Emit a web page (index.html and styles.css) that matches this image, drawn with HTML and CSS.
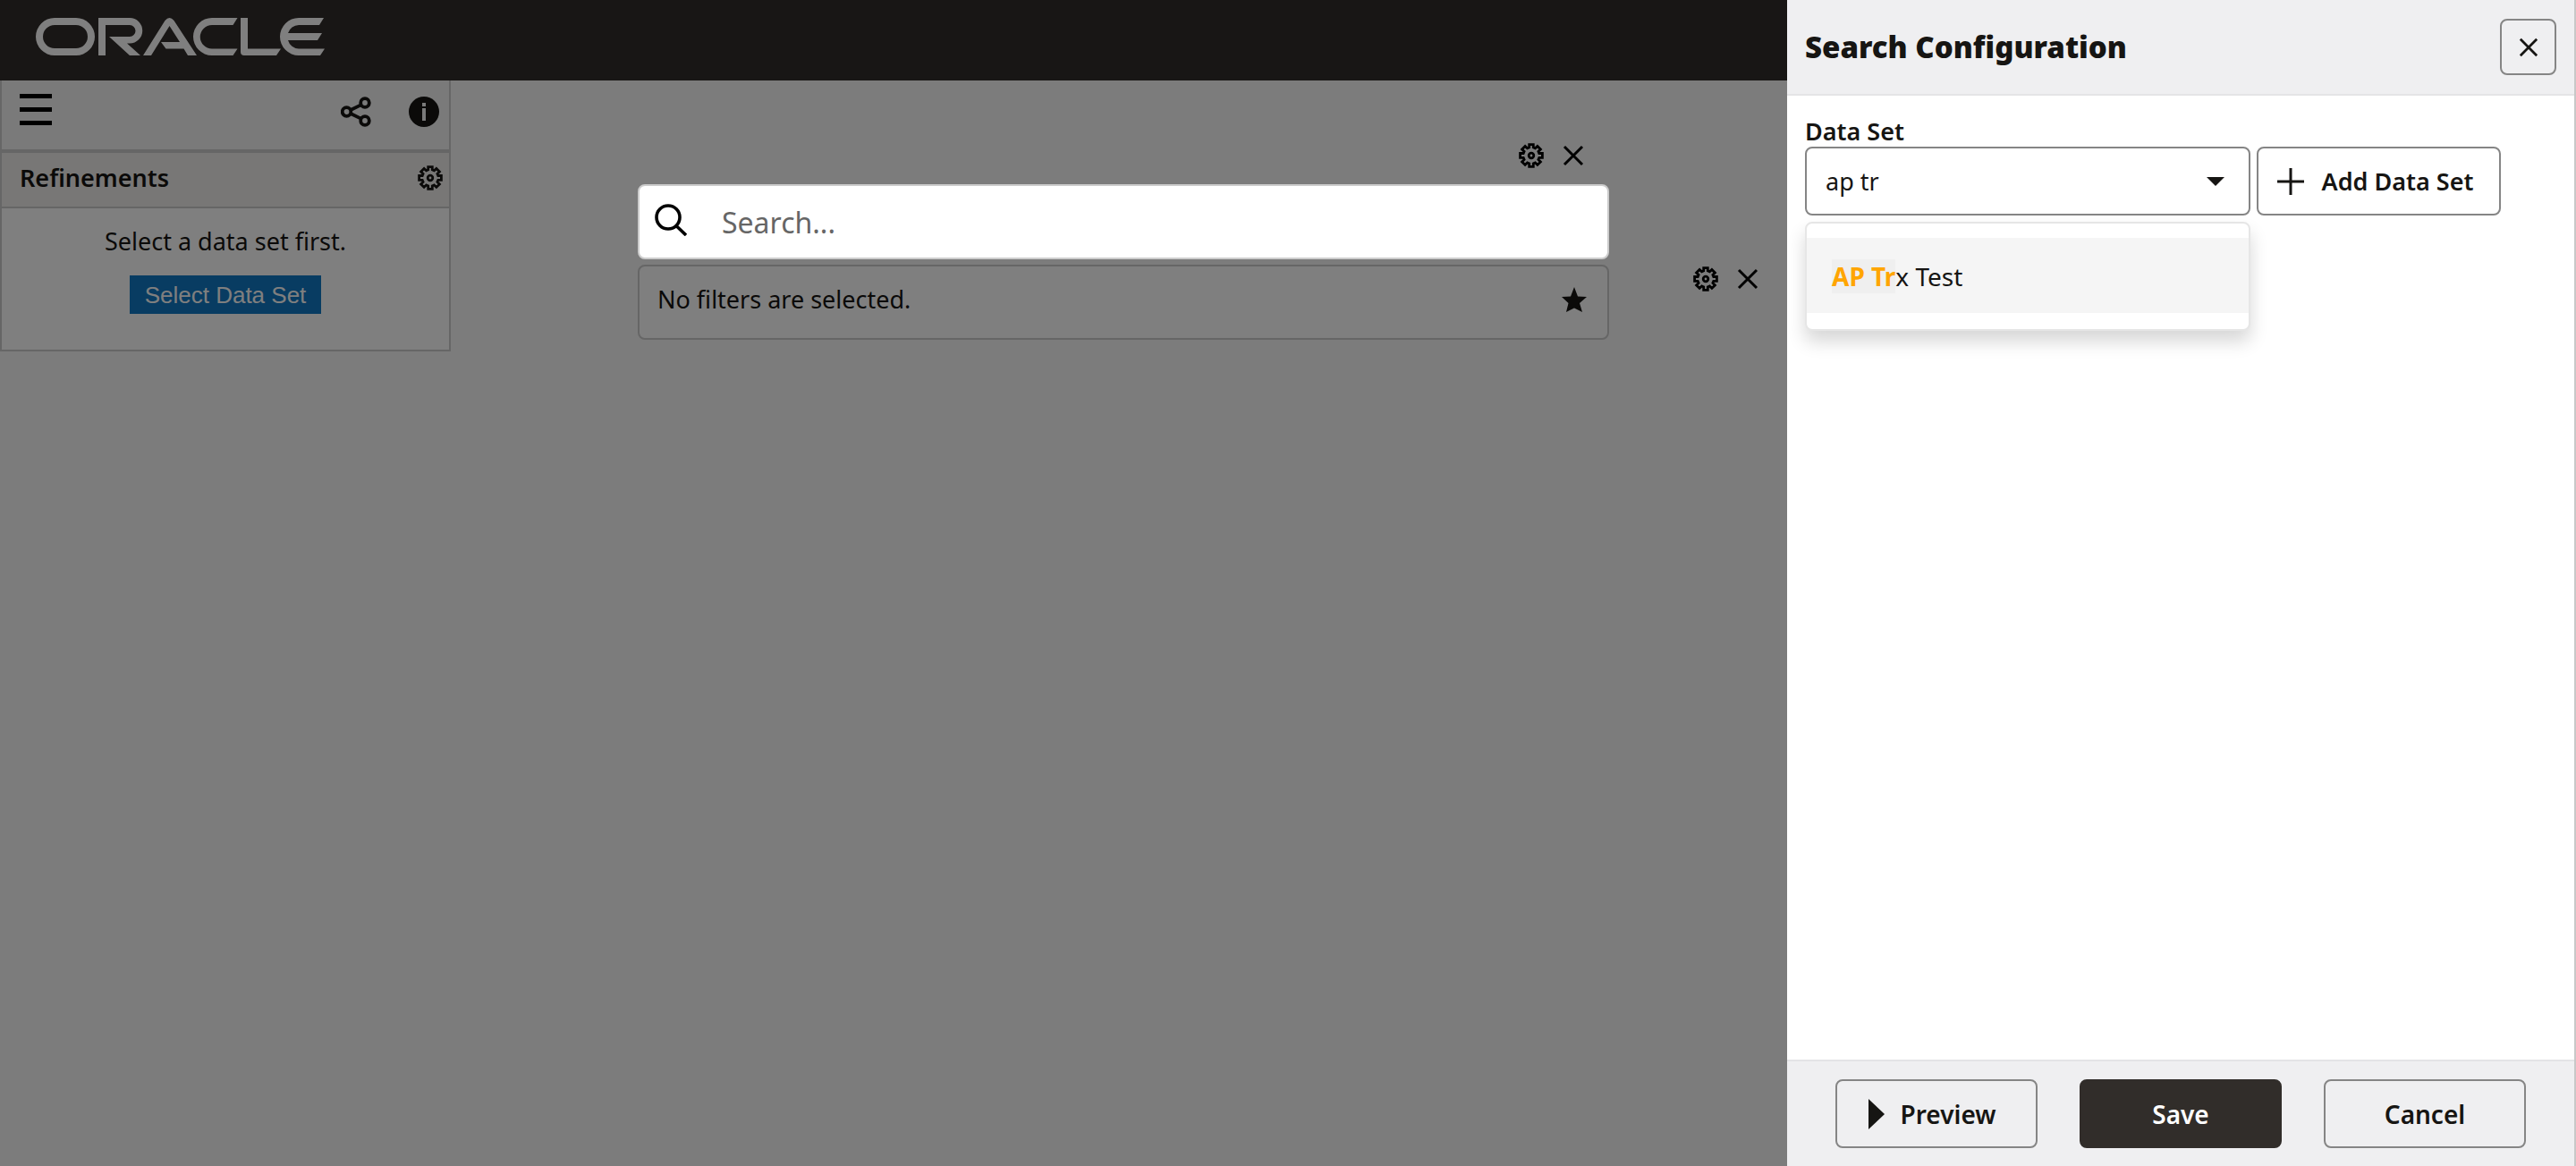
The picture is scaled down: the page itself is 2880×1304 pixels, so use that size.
FILE: index.html
```
<!DOCTYPE html>
<html lang="en">
<head>
<meta charset="utf-8">
<title>Search Configuration</title>
<meta name="viewport" content="width=device-width, initial-scale=1">
<link rel="stylesheet" href="styles.css">
</head>
<body>
<svg class="sprite" aria-hidden="true">
  <symbol id="gear" viewBox="0 0 28 28">
    <path fill="none" stroke="currentColor" stroke-width="2.8" d="M11.7 1.6h4.6v3.3l2.1.9 2.5-2.4 3.5 3.5-2.5 2.5.9 2.1h3.6v4.8h-3.6l-.9 2.1 2.5 2.5-3.5 3.5-2.5-2.4-2.1.9v3.5h-4.6v-3.5l-2.1-.9-2.5 2.4-3.5-3.5 2.5-2.5-.9-2.1H1.6v-4.8h3.6l.9-2.1-2.5-2.5 3.5-3.5 2.5 2.4 2.1-.9z"/>
    <circle cx="14" cy="14" r="2.8" fill="none" stroke="currentColor" stroke-width="2.8"/>
  </symbol>
  <symbol id="close" viewBox="0 0 24 24">
    <path fill="none" stroke="currentColor" stroke-width="3" d="M2 2l20 20M22 2L2 22"/>
  </symbol>
</svg>

<header class="app-header">
  <svg class="logo" viewBox="0 0 324 42" role="img" aria-label="Oracle">
    <g fill="currentColor">
      <path fill-rule="evenodd" d="M21 0h24a21 21 0 0 1 0 42H21a21 21 0 0 1 0-42zm0 8a13 13 0 0 0 0 26h24a13 13 0 0 0 0-26z"/>
      <path d="M70 42V0h35a14 14 0 0 1 0 28.500h-3L117 42h-12L82 21h23a6.500 6.500 0 0 0 0-13H78v34z"/>
      <path d="M120 42L144.500 3q5-6 10 0L180 42h-10l-4.500-7.500h-20L140 27h21L149.500 9 129 42z"/>
      <path d="M225.500 0l-5 8H197a13 13 0 0 0 0 26.500h28.500l-5 7.500H197a21 21 0 0 1 0-42z"/>
      <path d="M229 0h8v34.500h37l-5 7.500h-36q-4 0-4-4z"/>
      <path d="M322 0l-5 8h-23a13 13 0 0 0-12 9h38l-5 8h-33a13 13 0 0 0 12 9.500h29l-5 7.500h-24a21 21 0 0 1 0-42z"/>
    </g>
  </svg>
</header>

<div class="app-body">
  <aside class="sidebar">
    <div class="toolbar">
      <button class="icon-button" type="button" aria-label="Menu">
        <svg width="36" height="36" viewBox="0 0 36 36"><path fill="#000" d="M0 0h36v5H0zM0 15h36v5H0zM0 30h36v5H0z"/></svg>
      </button>
      <div class="toolbar-actions">
        <button class="icon-button" type="button" aria-label="Share">
          <svg width="34" height="34" viewBox="0 0 34 34" fill="none" stroke="currentColor" stroke-width="3.800"><circle cx="6.500" cy="17" r="4.800"/><circle cx="27" cy="7" r="4.800"/><circle cx="27" cy="27" r="4.800"/><path d="M11 15l11.500-5.600M11 19l11.500 5.600"/></svg>
        </button>
        <button class="icon-button" type="button" aria-label="Information">
          <svg width="34" height="34" viewBox="0 0 34 34"><circle cx="17" cy="17" r="17" fill="currentColor"/><path fill="#f5f5f5" d="M15 7h4v4h-4zM15 13h4v14h-4z"/></svg>
        </button>
      </div>
    </div>
    <div class="refinements-header">
      <h2>Refinements</h2>
      <button class="icon-button" type="button" aria-label="Refinement settings"><svg width="28" height="28"><use href="#gear"/></svg></button>
    </div>
    <div class="refinements-body">
      <p>Select a data set first.</p>
      <button class="select-data-set" type="button">Select Data Set</button>
    </div>
  </aside>

  <main class="workspace">
    <div class="region-tools search-tools">
      <button class="icon-button" type="button" aria-label="Search settings"><svg width="28" height="28"><use href="#gear"/></svg></button>
      <button class="icon-button" type="button" aria-label="Remove search"><svg width="24" height="24"><use href="#close"/></svg></button>
    </div>
    <label class="search-box">
      <svg width="36" height="36" viewBox="0 0 36 36" fill="none" stroke="#000" stroke-width="3.600" aria-hidden="true"><circle cx="15" cy="15" r="13"/><path d="M24 24.500L35 35"/></svg>
      <input type="search" placeholder="Search..." aria-label="Search">
    </label>
    <div class="filter-bar">
      <span>No filters are selected.</span>
      <button class="icon-button" type="button" aria-label="Saved searches"><svg width="28" height="28" viewBox="0 0 28 28"><path fill="currentColor" d="M14 0l4 10.500 10 .5-8 7 3 10-9-4.500L5 28l2.500-10L0 11l10-.500z"/></svg></button>
    </div>
    <div class="region-tools filter-tools">
      <button class="icon-button" type="button" aria-label="Filter settings"><svg width="28" height="28"><use href="#gear"/></svg></button>
      <button class="icon-button" type="button" aria-label="Remove filters"><svg width="24" height="24"><use href="#close"/></svg></button>
    </div>
  </main>
</div>

<div class="backdrop"></div>

<section class="drawer" role="dialog" aria-labelledby="drawer-title">
  <header class="drawer-header">
    <h1 id="drawer-title">Search Configuration</h1>
    <button class="button close-button" type="button" aria-label="Close"><svg width="22" height="22"><use href="#close"/></svg></button>
  </header>
  <div class="drawer-body">
    <label class="field-label" for="data-set">Data Set</label>
    <div class="field-row">
      <div class="combobox">
        <input id="data-set" type="text" value="ap tr" role="combobox" aria-expanded="true" aria-controls="data-set-options">
        <svg class="caret" width="20" height="10" viewBox="0 0 20 10" aria-hidden="true"><path fill="currentColor" d="M0 0h20L10 10z"/></svg>
        <ul class="options" id="data-set-options" role="listbox">
          <li role="option" aria-selected="true"><mark>AP Tr</mark>x Test</li>
        </ul>
      </div>
      <button class="button add-button" type="button">
        <svg width="30" height="30" viewBox="0 0 30 30" aria-hidden="true"><path fill="none" stroke="currentColor" stroke-width="3" d="M15 0v30M0 15h30"/></svg>
        Add Data Set
      </button>
    </div>
  </div>
  <footer class="drawer-footer">
    <button class="button preview-button" type="button">
      <svg width="18" height="34" viewBox="0 0 18 34" aria-hidden="true"><path fill="currentColor" d="M0 0l18 17L0 34z"/></svg>
      Preview
    </button>
    <button class="button primary" type="submit">Save</button>
    <button class="button" type="button">Cancel</button>
  </footer>
</section>
</body>
</html>
```
FILE: styles.css
```
* { box-sizing: border-box; }

body {
  margin: 0;
  min-height: 100vh;
  background: #f8f8f8;
  color: #161513;
  font: 27px/36px "Noto Sans", sans-serif;
}

h1, h2, p, ul { margin: 0; padding: 0; }
svg { display: block; flex: none; }
button, input { font: inherit; color: inherit; }

.sprite { position: absolute; width: 0; height: 0; }

.icon-button {
  padding: 0;
  border: 0;
  background: none;
  cursor: pointer;
}

/* Application shell */
.app-header {
  height: 90px;
  padding: 20px 40px;
  background: #312d2a;
  color: #fff;
}
.logo { width: 324px; height: 42px; }

.app-body { display: flex; align-items: flex-start; }

.sidebar {
  flex: none;
  width: 504px;
  border: 2px solid #ccc;
  border-top: 0;
  background: #fff;
}
.toolbar {
  display: flex;
  justify-content: space-between;
  align-items: flex-start;
  height: 81px;
  padding: 15px 11px 0 20px;
  border-bottom: 4px solid #ccc;
  background: #f5f5f5;
}
.toolbar-actions { display: flex; gap: 42px; padding-top: 3px; }

.refinements-header {
  display: flex;
  justify-content: space-between;
  align-items: center;
  height: 62px;
  padding: 0 7px 4px 20px;
  border-bottom: 2px solid #ccc;
  background: #f1efed;
}
.refinements-header h2 { font-size: 27px; font-weight: 600; }

.refinements-body {
  display: flex;
  flex-direction: column;
  align-items: center;
  gap: 20px;
  padding: 19px 20px 40px;
}
.select-data-set {
  height: 43px;
  padding: 0 17px;
  border: 0;
  background: #1078c4;
  color: #fff;
  font: 26px/40px "Liberation Sans", sans-serif;
}

.workspace {
  flex: 1;
  display: grid;
  grid-template-columns: 209fr 1086fr 1081fr;
  grid-template-rows: 40px 84px 84px;
  row-gap: 6px;
  padding-top: 70px;
}
.region-tools { display: flex; align-items: center; gap: 21px; color: #000; }
.search-tools {
  grid-area: 1 / 2;
  align-self: start;
  justify-content: flex-end;
  padding-right: 28px;
}
.filter-tools {
  grid-area: 3 / 3;
  align-self: start;
  padding: 2px 0 0 94px;
}

.search-box, .filter-bar {
  display: flex;
  align-items: center;
  border: 2px solid #ccc;
  border-radius: 8px;
  background: #fff;
}
/* The search box stays bright above the backdrop */
.search-box {
  grid-area: 2 / 2;
  position: relative;
  z-index: 2;
  gap: 39px;
  padding: 0 17px 4px;
}
.search-box input {
  flex: 1;
  min-width: 0;
  padding: 6px 0 0;
  border: 0;
  outline: 0;
  background: none;
  font-size: 32px;
  line-height: 44px;
}
.search-box input::placeholder { color: #666; opacity: 1; }

.filter-bar {
  grid-area: 3 / 2;
  justify-content: space-between;
  padding: 0 23px 6px 20px;
}

.backdrop {
  position: fixed;
  inset: 0;
  z-index: 1;
  background: rgba(0, 0, 0, .5);
}

/* Configuration drawer */
.drawer {
  position: fixed;
  inset: 0 0 0 auto;
  z-index: 3;
  display: flex;
  flex-direction: column;
  width: 882px;
  max-width: 100%;
  border-right: 2px solid #c8c8c8;
  background: #fff;
}
.drawer-header {
  display: flex;
  justify-content: space-between;
  align-items: center;
  padding: 21px 20px;
  border-bottom: 2px solid #e4e4e6;
  background: #efeff1;
}
.drawer-header h1 { font-size: 33px; line-height: 44px; font-weight: 900; }

.button {
  display: flex;
  align-items: center;
  justify-content: center;
  height: 77px;
  padding: 0;
  border: 2px solid #858585;
  border-radius: 8px;
  background: none;
  font-size: 27px;
  font-weight: 600;
  cursor: pointer;
}
.close-button { width: 63px; height: 63px; }

.drawer-body { flex: 1; padding: 22px 20px; }
.field-label { display: block; line-height: 35px; font-weight: 600; }
.field-row { display: flex; gap: 7px; }

.combobox {
  position: relative;
  display: flex;
  align-items: center;
  width: 498px;
  height: 77px;
  padding: 0 27px 0 21px;
  border: 2px solid #858585;
  border-radius: 8px;
}
.combobox input {
  flex: 1;
  min-width: 0;
  padding: 0;
  border: 0;
  outline: 0;
  background: none;
}

.options {
  position: absolute;
  top: 82px;
  left: -2px;
  right: -2px;
  padding: 16px 0 18px;
  border: 2px solid #e6e6e6;
  border-radius: 8px;
  background: #fff;
  box-shadow: 0 12px 20px rgba(0, 0, 0, .16);
  list-style: none;
}
.options li { padding: 25px 28px 23px; background: #f5f5f5; font-size: 28px; }
.options mark { background: #efefef; color: #ffa500; font-weight: 700; }

.add-button { gap: 20px; width: 273px; padding-right: 8px; }

.drawer-footer {
  display: flex;
  justify-content: center;
  gap: 47px;
  padding: 20px;
  border-top: 2px solid #e4e4e6;
  background: #efeff1;
}
.drawer-footer .button { width: 226px; font-size: 28px; }
.drawer-footer .preview-button { gap: 18px; padding-right: 10px; }
.drawer-footer .primary { border-color: #312d2a; background: #312d2a; color: #fff; }
```
